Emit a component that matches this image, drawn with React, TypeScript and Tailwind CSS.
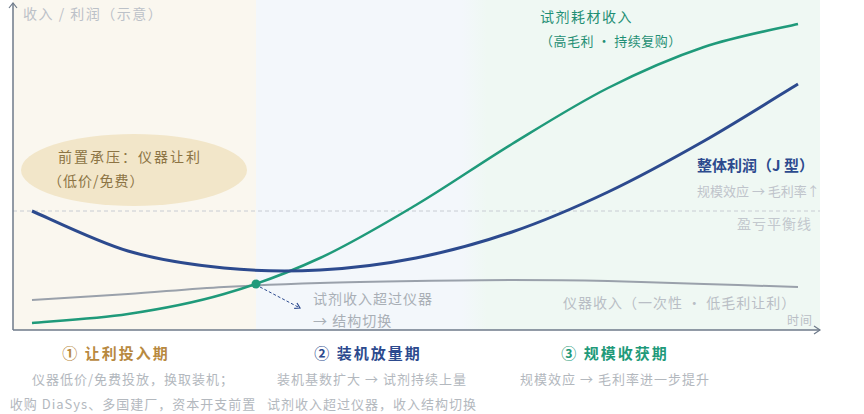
import React from 'react';

type Pt = [number, number];

// catmull-rom -> cubic bezier, so the curves pass through the sampled points
const smoothPath = (pts: Pt[]) => {
  let d = `M${pts[0][0]},${pts[0][1]}`;
  for (let i = 0; i < pts.length - 1; i++) {
    const p0 = pts[i - 1] || pts[i];
    const p1 = pts[i];
    const p2 = pts[i + 1];
    const p3 = pts[i + 2] || p2;
    const c1: Pt = [p1[0] + (p2[0] - p0[0]) / 6, p1[1] + (p2[1] - p0[1]) / 6];
    const c2: Pt = [p2[0] - (p3[0] - p1[0]) / 6, p2[1] - (p3[1] - p1[1]) / 6];
    d += ` C${c1[0].toFixed(1)},${c1[1].toFixed(1)} ${c2[0].toFixed(1)},${c2[1].toFixed(1)} ${p2[0]},${p2[1]}`;
  }
  return d;
};

// evenly spaced samples keep the curves free of kinks
const xs = [32, 128, 224, 320, 416, 512, 608, 704, 798];
const zip = (ys: number[]): Pt[] => xs.map((x, i) => [x, ys[i]]);

const profit = zip([211, 251, 268, 270, 258, 232, 192, 141, 84]);
const reagent = zip([323, 314, 294, 258, 205, 144, 88, 47, 24]);
const instrument = zip([300, 294, 287, 283, 281, 280, 281, 284, 287]);

const phases = [
  {
    title: '① 让利投入期',
    color: 'text-[#b8893f]',
    width: 'w-[240px]',
    shift: 'mr-[34px]',
    lines: ['仪器低价/免费投放，换取装机；', '收购 DiaSys、多国建厂，资本开支前置'],
  },
  {
    title: '② 装机放量期',
    color: 'text-[#2c4a8e]',
    width: 'w-[238px]',
    shift: 'mr-[8px]',
    lines: ['装机基数扩大 → 试剂持续上量', '试剂收入超过仪器，收入结构切换'],
  },
  {
    title: '③ 规模收获期',
    color: 'text-[#1f9a7a]',
    width: 'w-[248px]',
    shift: '',
    lines: ['规模效应 → 毛利率进一步提升'],
  },
];

const App: React.FC = () => {
  return (
    <div className="w-[864px] h-[414px] bg-white overflow-hidden font-['Noto_Sans_CJK_SC','Liberation_Sans',sans-serif]">
      {/* Chart */}
      <svg width={864} height={336} className="block">
        <defs>
          <linearGradient id="ph3" x1="0" x2="1" y1="0" y2="0">
            <stop offset="0" stopColor="#f3f7fb" />
            <stop offset="0.07" stopColor="#eff8f3" />
            <stop offset="1" stopColor="#eff8f3" />
          </linearGradient>
          <marker id="arr" markerWidth="8" markerHeight="8" refX="6" refY="4" orient="auto">
            <path d="M1,1 L6,4 L1,7" fill="none" stroke="#2c4a8e" strokeWidth="1.2" />
          </marker>
        </defs>

        {/* phase backgrounds */}
        <rect x={13} y={0} width={243} height={330} fill="#faf7ef" />
        <rect x={256} y={0} width={210} height={330} fill="#f3f7fb" />
        <rect x={462} y={0} width={358} height={330} fill="url(#ph3)" />

        {/* breakeven */}
        <line x1={13} y1={211} x2={820} y2={211} stroke="#c8ccd3" strokeWidth={1} strokeDasharray="4 3" />

        {/* pressure bubble */}
        <ellipse cx={134} cy={170} rx={113} ry={36} fill="#f2e6c9" />
        <text x={58} y={162} fontSize={14} fill="#8c7444" className="tracking-[2px]">前置承压：仪器让利</text>
        <text x={48} y={186} fontSize={14} fill="#8c7444" className="tracking-[1px]">（低价/免费）</text>

        {/* curves */}
        <path d={smoothPath(instrument)} fill="none" stroke="#9aa1ab" strokeWidth={2} />
        <path d={smoothPath(reagent)} fill="none" stroke="#1f9a7a" strokeWidth={2.5} />
        <path d={smoothPath(profit)} fill="none" stroke="#2c4a8e" strokeWidth={3} />

        {/* crossover */}
        <line x1={260} y1={287} x2={300} y2={308} stroke="#2c4a8e" strokeWidth={1} strokeDasharray="3 2" markerEnd="url(#arr)" />
        <circle cx={256} cy={284} r={4.5} fill="#1f9a7a" />
        <text x={313} y={304} fontSize={14} fill="#a9afb6" className="tracking-[1px]">试剂收入超过仪器</text>
        <text x={313} y={326} fontSize={14} fill="#a9afb6" className="tracking-[1px]">→ 结构切换</text>

        {/* labels */}
        <text x={23} y={19} fontSize={14} fill="#bcc1c8" className="tracking-[1.5px]">收入 / 利润（示意）</text>
        <text x={540} y={22} fontSize={14} fill="#1f8f74" className="tracking-[1.5px]">试剂耗材收入</text>
        <text x={540} y={46} fontSize={13} fill="#1f8f74" className="tracking-[0.5px]">（高毛利 · 持续复购）</text>
        <text x={697} y={171} fontSize={15} fontWeight={700} fill="#2c4a8e">整体利润（J 型）</text>
        <text x={697} y={196} fontSize={13} fill="#bfc4cb">规模效应 → 毛利率↑</text>
        <text x={737} y={229} fontSize={14} fill="#c3c8ce" className="tracking-[1px]">盈亏平衡线</text>
        <text x={563} y={308} fontSize={14} fill="#b9bec5" className="tracking-[1px]">仪器收入（一次性 · 低毛利让利）</text>
        <text x={787} y={325} fontSize={12} fill="#b9bec5" className="tracking-[1px]">时间</text>

        {/* axes */}
        <line x1={13} y1={330} x2={13} y2={3} stroke="#6e7a8a" strokeWidth={1.5} />
        <path d="M9,8 L13,3 L17,8" fill="none" stroke="#6e7a8a" strokeWidth={1.2} />
        <line x1={13} y1={330} x2={820} y2={330} stroke="#6e7a8a" strokeWidth={1.5} />
        <path d="M814,326 L820,330 L814,334" fill="none" stroke="#6e7a8a" strokeWidth={1.2} />
      </svg>

      {/* Phase notes */}
      <div className="flex pl-[13px] pt-[6px]">
        {phases.map((p) => (
          <div key={p.title} className={`${p.width} flex flex-col items-center whitespace-nowrap`}>
            <div className={`${p.color} ${p.shift} text-[15px] font-bold leading-[22px] tracking-[2px]`}>{p.title}</div>
            <div className="mt-[2px] text-[#b3b8be] text-[13px] leading-[25px] tracking-[1px] text-center">
              {p.lines.map((l) => (
                <div key={l}>{l}</div>
              ))}
            </div>
          </div>
        ))}
      </div>
    </div>
  );
};

export default App;
